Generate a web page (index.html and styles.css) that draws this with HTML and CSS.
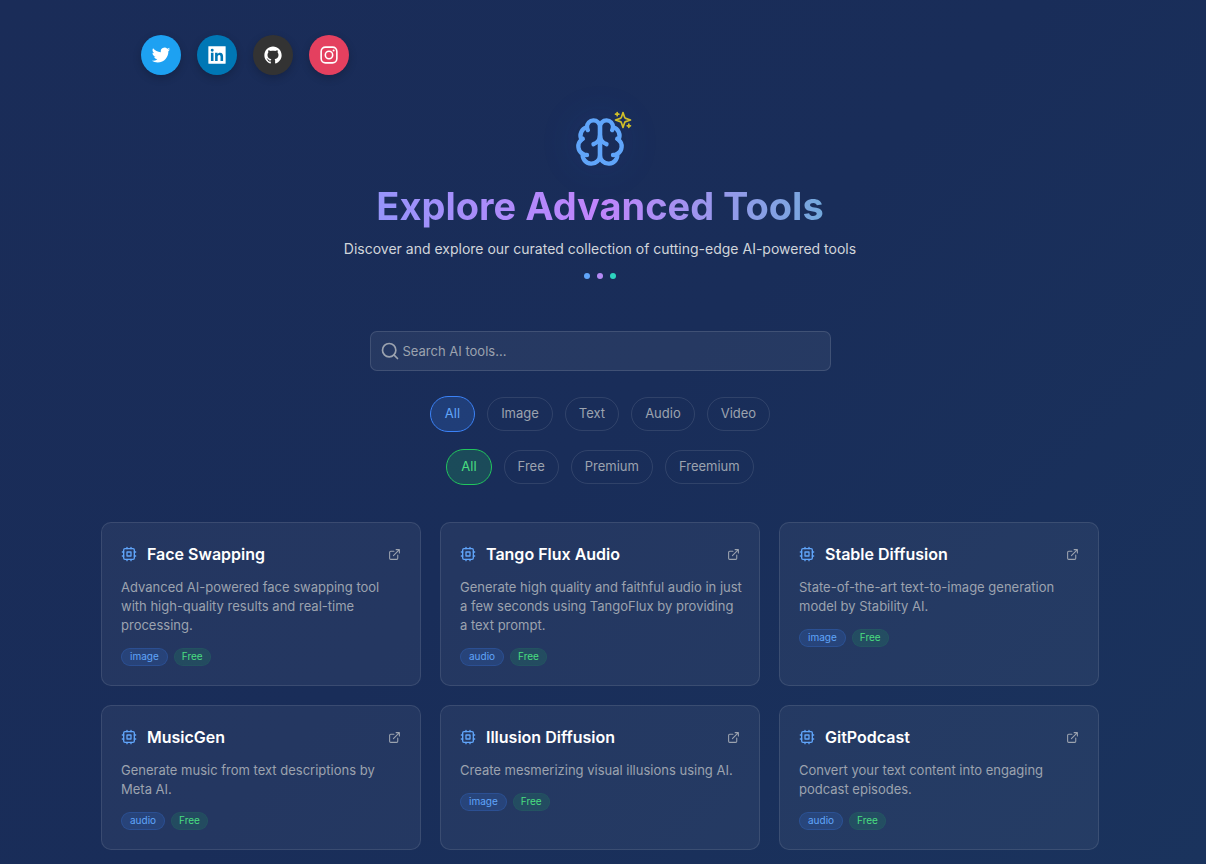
FILE: index.html
```html
<!DOCTYPE html>
<html lang="en">
<head>
<meta charset="utf-8">
<meta name="viewport" content="width=device-width, initial-scale=1">
<title>Explore Advanced Tools</title>
<link rel="stylesheet" href="styles.css">
</head>
<body>
<svg class="sprite" aria-hidden="true">
  <symbol id="cpu" viewBox="0 0 24 24"><rect x="4" y="4" width="16" height="16" rx="2"/><rect x="9" y="9" width="6" height="6"/><path d="M15 2v2M15 20v2M2 15h2M2 9h2M20 15h2M20 9h2M9 2v2M9 20v2"/></symbol>
  <symbol id="external" viewBox="0 0 24 24"><path d="M15 3h6v6M10 14 21 3M18 13v6a2 2 0 0 1-2 2H5a2 2 0 0 1-2-2V8a2 2 0 0 1 2-2h6"/></symbol>
</svg>
<div class="page">
  <nav class="social" aria-label="Social links">
    <a class="social-link twitter" href="#" aria-label="Twitter"><svg width="20" height="20" viewBox="-1 -1 26 26" fill="currentColor"><path d="M23.953 4.57a10 10 0 01-2.825.775 4.958 4.958 0 002.163-2.723c-.951.555-2.005.959-3.127 1.184a4.92 4.92 0 00-8.384 4.482C7.69 8.095 4.067 6.13 1.64 3.162a4.822 4.822 0 00-.666 2.475c0 1.71.87 3.213 2.188 4.096a4.904 4.904 0 01-2.228-.616v.06a4.923 4.923 0 003.946 4.827 4.996 4.996 0 01-2.212.085 4.936 4.936 0 004.604 3.417 9.867 9.867 0 01-6.102 2.105c-.39 0-.779-.023-1.17-.067a13.995 13.995 0 007.557 2.209c9.053 0 13.998-7.496 13.998-13.985 0-.21 0-.42-.015-.63A9.935 9.935 0 0024 4.59z"/></svg></a>
    <a class="social-link linkedin" href="#" aria-label="LinkedIn"><svg width="18" height="18" viewBox="-0.5 -0.5 25 25" fill="currentColor"><path d="M20.447 20.452h-3.554v-5.569c0-1.328-.027-3.037-1.852-3.037-1.853 0-2.136 1.445-2.136 2.939v5.667H9.351V9h3.414v1.561h.046c.477-.9 1.637-1.85 3.37-1.85 3.601 0 4.267 2.37 4.267 5.455v6.286zM5.337 7.433a2.062 2.062 0 01-2.063-2.065 2.064 2.064 0 112.063 2.065zm1.782 13.019H3.555V9h3.564v11.452zM23.6 0H.4C.2 0 0 .2 0 .4v23.2c0 .2.2.4.4.4h23.2c.2 0 .4-.2.4-.4V.4c0-.2-.2-.4-.4-.4z"/></svg></a>
    <a class="social-link github" href="#" aria-label="GitHub"><svg width="18" height="18" viewBox="-0.5 -0.5 25 25" fill="currentColor"><path d="M12 .297c-6.63 0-12 5.373-12 12 0 5.303 3.438 9.8 8.205 11.385.6.113.82-.258.82-.577 0-.285-.01-1.04-.015-2.04-3.338.724-4.042-1.61-4.042-1.61C4.422 18.07 3.633 17.7 3.633 17.7c-1.087-.744.084-.729.084-.729 1.205.084 1.838 1.236 1.838 1.236 1.07 1.835 2.809 1.305 3.495.998.108-.776.417-1.305.76-1.605-2.665-.3-5.466-1.332-5.466-5.93 0-1.31.465-2.38 1.235-3.22-.135-.303-.54-1.523.105-3.176 0 0 1.005-.322 3.3 1.23.96-.267 1.98-.399 3-.405 1.02.006 2.04.138 3 .405 2.28-1.552 3.285-1.23 3.285-1.23.645 1.653.24 2.873.12 3.176.765.84 1.23 1.91 1.23 3.22 0 4.61-2.805 5.625-5.475 5.92.42.36.81 1.096.81 2.22 0 1.606-.015 2.896-.015 3.286 0 .315.21.69.825.57C20.565 22.092 24 17.592 24 12.297c0-6.627-5.373-12-12-12"/></svg></a>
    <a class="social-link instagram" href="#" aria-label="Instagram"><svg width="18" height="18" viewBox="-0.5 -0.5 25 25" fill="none" stroke="currentColor" stroke-width="2.2"><rect x="1.1" y="1.1" width="21.8" height="21.8" rx="6"/><circle cx="12" cy="12" r="5.1"/><circle cx="18.4" cy="5.6" r="1.4" fill="currentColor" stroke="none"/></svg></a>
  </nav>

  <header class="hero">
    <div class="logo">
      <svg class="brain" viewBox="0 0 24 24"><path d="M12 5a3 3 0 1 0-5.997.125 4 4 0 0 0-2.526 5.77 4 4 0 0 0 .556 6.588A4 4 0 1 0 12 18Z"/><path d="M12 5a3 3 0 1 1 5.997.125 4 4 0 0 1 2.526 5.77 4 4 0 0 1-.556 6.588A4 4 0 1 1 12 18Z"/><path d="M15 13a4.5 4.5 0 0 1-3-4 4.5 4.5 0 0 1-3 4M17.599 6.5a3 3 0 0 0 .399-1.375M6.003 5.125A3 3 0 0 0 6.401 6.5M3.477 10.896a4 4 0 0 1 .585-.396M19.938 10.5a4 4 0 0 1 .585.396M6 18a4 4 0 0 1-1.967-.516M19.967 17.484A4 4 0 0 1 18 18"/></svg>
      <svg class="sparkles" viewBox="0 0 24 24"><path d="m12 3-1.912 5.813a2 2 0 0 1-1.275 1.275L3 12l5.813 1.912a2 2 0 0 1 1.275 1.275L12 21l1.912-5.813a2 2 0 0 1 1.275-1.275L21 12l-5.813-1.912a2 2 0 0 1-1.275-1.275L12 3ZM5 3v4M19 17v4M3 5h4M17 19h4"/></svg>
    </div>
    <h1 class="title">Explore Advanced Tools</h1>
    <p class="subtitle">Discover and explore our curated collection of cutting-edge AI-powered tools</p>
    <div class="dots"><span class="dot dot-blue"></span><span class="dot dot-purple"></span><span class="dot dot-teal"></span></div>
  </header>

  <main class="content">
    <label class="search">
      <svg class="search-icon" viewBox="0 0 24 24"><circle cx="11" cy="11" r="8"/><path d="m21 21-4.3-4.3"/></svg>
      <input class="search-input" type="text" placeholder="Search AI tools..." aria-label="Search AI tools">
    </label>

    <div class="filters" role="group" aria-label="Category">
      <button class="pill pill-blue" type="button" aria-pressed="true">All</button>
      <button class="pill" type="button">Image</button>
      <button class="pill" type="button">Text</button>
      <button class="pill" type="button">Audio</button>
      <button class="pill" type="button">Video</button>
    </div>
    <div class="filters" role="group" aria-label="Pricing">
      <button class="pill pill-green" type="button" aria-pressed="true">All</button>
      <button class="pill" type="button">Free</button>
      <button class="pill" type="button">Premium</button>
      <button class="pill" type="button">Freemium</button>
    </div>

    <section class="grid">
      <article class="card">
        <div class="card-head"><svg class="cpu"><use href="#cpu"/></svg><h2 class="card-title">Face Swapping</h2><a class="card-link" href="#" aria-label="Open Face Swapping"><svg class="external"><use href="#external"/></svg></a></div>
        <p class="card-text">Advanced AI-powered face swapping tool with high-quality results and real-time processing.</p>
        <div class="tags"><span class="tag">image</span><span class="tag tag-free">Free</span></div>
      </article>
      <article class="card">
        <div class="card-head"><svg class="cpu"><use href="#cpu"/></svg><h2 class="card-title">Tango Flux Audio</h2><a class="card-link" href="#" aria-label="Open Tango Flux Audio"><svg class="external"><use href="#external"/></svg></a></div>
        <p class="card-text">Generate high quality and faithful audio in just a few seconds using TangoFlux by providing a text prompt.</p>
        <div class="tags"><span class="tag">audio</span><span class="tag tag-free">Free</span></div>
      </article>
      <article class="card">
        <div class="card-head"><svg class="cpu"><use href="#cpu"/></svg><h2 class="card-title">Stable Diffusion</h2><a class="card-link" href="#" aria-label="Open Stable Diffusion"><svg class="external"><use href="#external"/></svg></a></div>
        <p class="card-text">State-of-the-art text-to-image generation model by Stability AI.</p>
        <div class="tags"><span class="tag">image</span><span class="tag tag-free">Free</span></div>
      </article>
      <article class="card">
        <div class="card-head"><svg class="cpu"><use href="#cpu"/></svg><h2 class="card-title">MusicGen</h2><a class="card-link" href="#" aria-label="Open MusicGen"><svg class="external"><use href="#external"/></svg></a></div>
        <p class="card-text">Generate music from text descriptions by Meta AI.</p>
        <div class="tags"><span class="tag">audio</span><span class="tag tag-free">Free</span></div>
      </article>
      <article class="card">
        <div class="card-head"><svg class="cpu"><use href="#cpu"/></svg><h2 class="card-title">Illusion Diffusion</h2><a class="card-link" href="#" aria-label="Open Illusion Diffusion"><svg class="external"><use href="#external"/></svg></a></div>
        <p class="card-text">Create mesmerizing visual illusions using AI.</p>
        <div class="tags"><span class="tag">image</span><span class="tag tag-free">Free</span></div>
      </article>
      <article class="card">
        <div class="card-head"><svg class="cpu"><use href="#cpu"/></svg><h2 class="card-title">GitPodcast</h2><a class="card-link" href="#" aria-label="Open GitPodcast"><svg class="external"><use href="#external"/></svg></a></div>
        <p class="card-text">Convert your text content into engaging podcast episodes.</p>
        <div class="tags"><span class="tag">audio</span><span class="tag tag-free">Free</span></div>
      </article>
    </section>
  </main>
</div>
</body>
</html>
```
FILE: styles.css
```css
* { box-sizing: border-box; }

body {
  margin: 0;
  min-height: 100vh;
  background: linear-gradient(135deg, #1a2c58 0%, #192d59 50%, #1a335d 100%);
  color: #fff;
  font-family: Inter, "Liberation Sans", sans-serif;
}

h1, h2, p { margin: 0; }
button, input { font-family: inherit; }
svg { display: block; }
.sprite { position: absolute; width: 0; height: 0; }

.page {
  max-width: 1206px;
  margin: 0 auto;
  padding: 35px 107px 14px 101px;
}

.social { display: flex; gap: 16px; padding-left: 40px; }
.social-link {
  display: flex;
  align-items: center;
  justify-content: center;
  width: 40px;
  height: 40px;
  border-radius: 50%;
  color: #fff;
  box-shadow: 0 3px 8px rgba(0, 0, 0, 0.2);
}
.twitter { background: #1da1f2; }
.linkedin { background: #0077b5; }
.github { background: #333; }
.instagram { background: #e4405f; }

.hero {
  display: flex;
  flex-direction: column;
  align-items: center;
  padding-top: 41px;
  text-align: center;
}
.logo {
  position: relative;
  border-radius: 50%;
  box-shadow: 0 0 40px rgba(37, 99, 235, 0.1);
}
.brain, .sparkles, .search-icon, .cpu, .external {
  fill: none;
  stroke: currentColor;
  stroke-width: 2;
  stroke-linecap: round;
  stroke-linejoin: round;
}
.brain { width: 52px; height: 52px; color: #60a5fa; }
.sparkles {
  position: absolute;
  top: -6px;
  right: -7px;
  width: 20px;
  height: 20px;
  color: #f0d820;
  opacity: 0.85;
}
.title {
  margin-top: 13px;
  font-size: 38px;
  line-height: 50px;
  font-weight: 700;
  color: transparent;
  background: linear-gradient(90deg, #9694fa 0%, #c084fc 50%, #73a9dc 100%);
  -webkit-background-clip: text;
  background-clip: text;
}
.subtitle {
  margin-top: 7px;
  color: #d1d5db;
  font-size: 14px;
  line-height: 22px;
}
.dots { display: flex; gap: 7px; margin-top: 13px; }
.dot { width: 6px; height: 6px; border-radius: 50%; }
.dot-blue { background: #60a5fa; }
.dot-purple { background: #b48af5; }
.dot-teal { background: #2dd4bf; }

.content { padding-top: 52px; }
.search {
  display: flex;
  align-items: center;
  gap: 3px;
  max-width: 461px;
  height: 40px;
  margin: 0 auto 26px;
  padding: 0 9px;
  border: 1px solid rgba(255, 255, 255, 0.12);
  border-radius: 7px;
  background: rgba(255, 255, 255, 0.06);
}
.search-icon { width: 20px; height: 20px; flex: none; color: #9ca3af; }
.search-input {
  flex: 1;
  min-width: 0;
  padding: 0;
  border: 0;
  outline: 0;
  background: none;
  color: #fff;
  font-size: 13px;
}
.search-input::placeholder { color: #9ca3af; opacity: 1; }

.filters {
  display: flex;
  flex-wrap: wrap;
  align-items: center;
  justify-content: center;
  gap: 12px;
  margin-bottom: 19px;
}
.pill {
  height: 34px;
  padding: 0 13px 2px;
  border: 1px solid rgba(255, 255, 255, 0.1);
  border-radius: 18px;
  background: none;
  color: #9ca3af;
  font-size: 13px;
}
.pill-blue, .pill-green { height: 36px; margin: -1px 0; padding: 0 14px 2px; }
.pill-blue { border-color: #3b82f6; background: rgba(59, 130, 246, 0.2); color: #60a5fa; }
.pill-green { border-color: #22c55e; background: rgba(34, 197, 94, 0.2); color: #4ade80; }

.grid {
  display: grid;
  grid-template-columns: repeat(auto-fit, minmax(280px, 1fr));
  gap: 19px;
  padding-top: 19px;
}
.card {
  padding: 19px 15px 19px 19px;
  border: 1px solid rgba(255, 255, 255, 0.1);
  border-radius: 10px;
  background: rgba(255, 255, 255, 0.05);
}
.card-head { display: flex; align-items: center; padding-right: 4px; }
.cpu { width: 16px; height: 16px; color: #60a5fa; }
.card-title {
  flex: 1;
  margin-left: 10px;
  font-size: 16px;
  line-height: 24px;
  font-weight: 600;
}
.card-link { color: #9ca3af; }
.external { width: 13px; height: 13px; }
.card-text {
  margin-top: 12px;
  color: #9ca3af;
  font-size: 13px;
  line-height: 19px;
}
.tags { display: flex; gap: 6px; margin-top: 13px; }
.tag {
  padding: 0 8px 1px;
  border: 1px solid rgba(59, 130, 246, 0.2);
  border-radius: 9px;
  background: rgba(59, 130, 246, 0.16);
  color: #60a5fa;
  font-size: 10px;
  line-height: 15px;
}
.tag-free {
  padding: 0 7px 1px;
  border-color: rgba(34, 197, 94, 0.06);
  background: rgba(34, 197, 94, 0.14);
  color: #4ade80;
}
```
